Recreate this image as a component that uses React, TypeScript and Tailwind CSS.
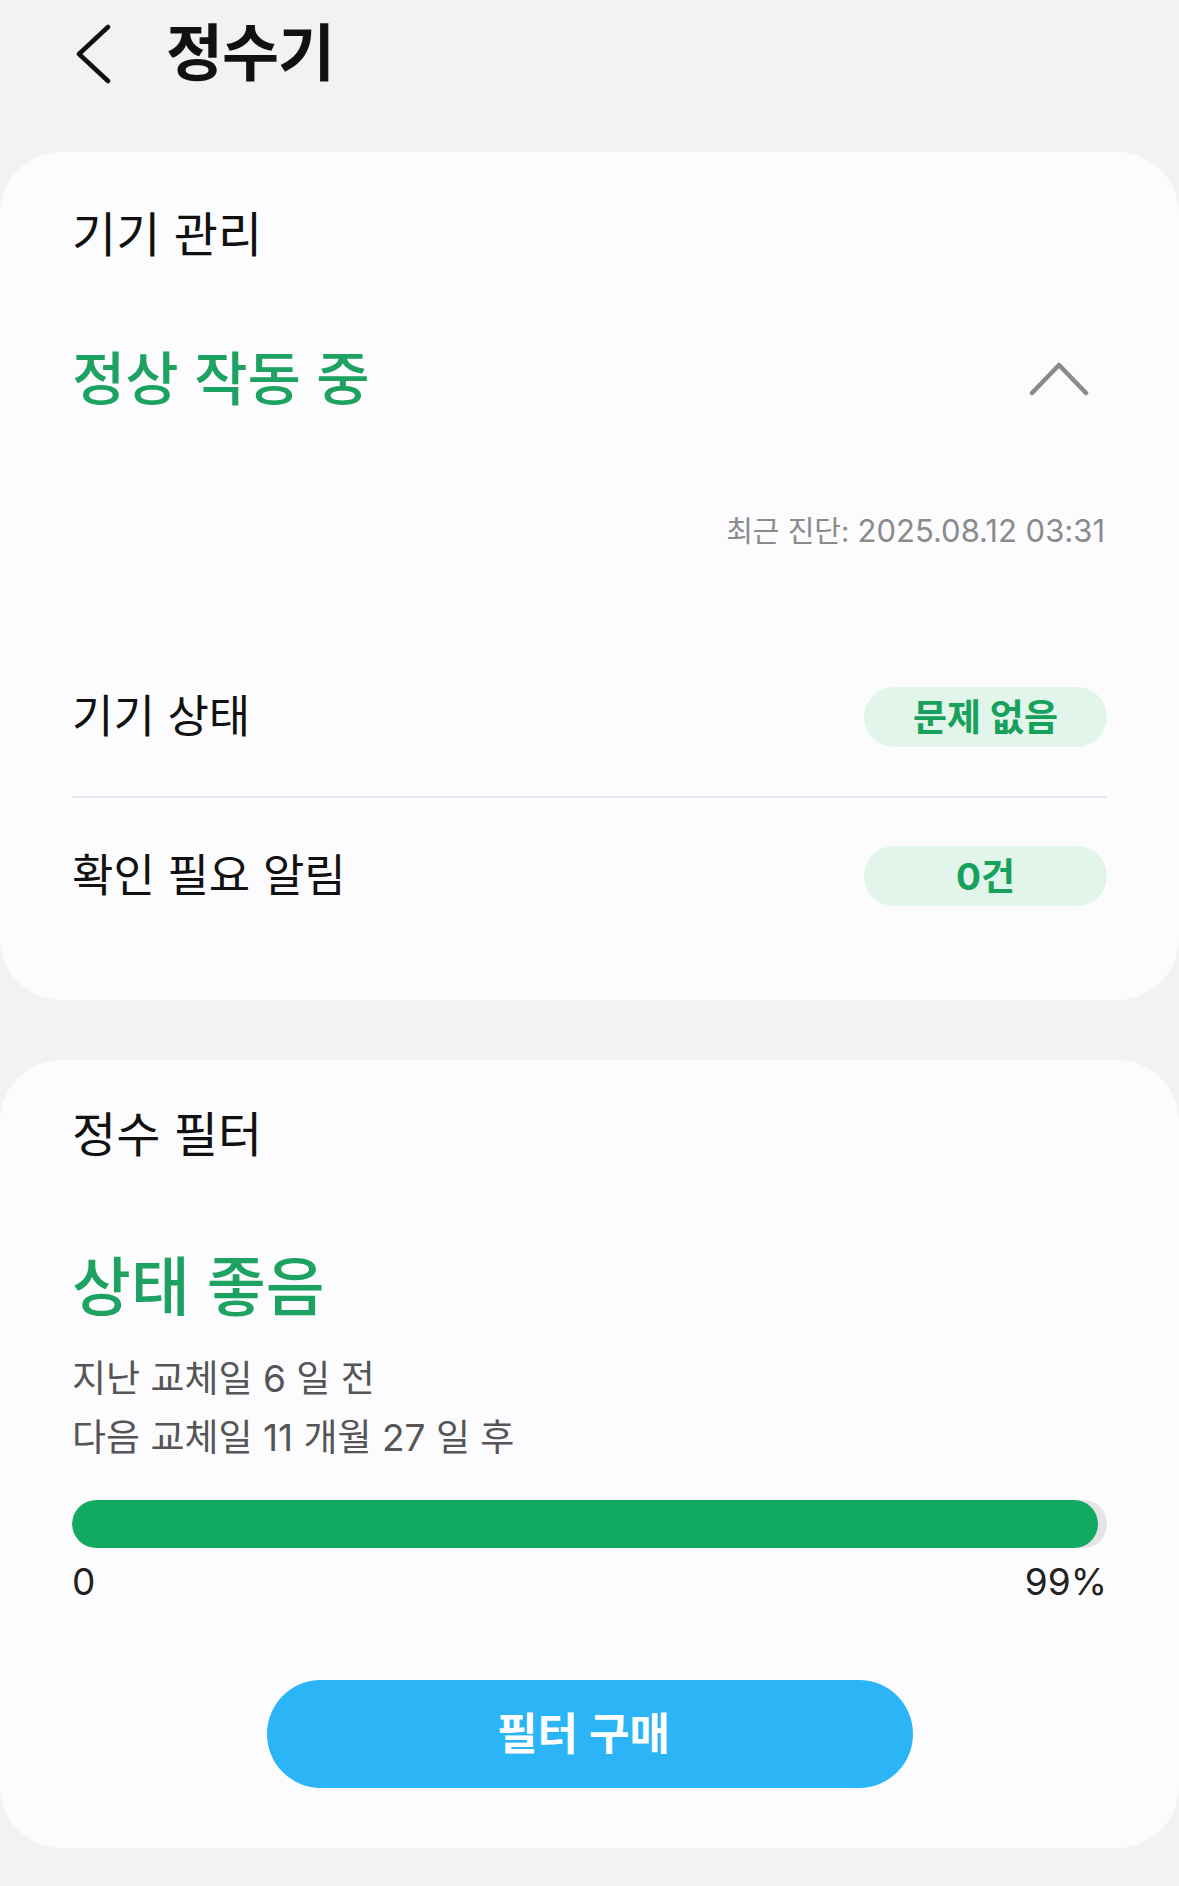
import React from "react";

const F = { fontFamily: 'Inter, "Noto Sans CJK KR", "Noto Sans", sans-serif' };

function Badge({ children }: { children: React.ReactNode }) {
  return (
    <div className="w-[243px] h-[60px] rounded-full bg-[#e2f5ea] flex items-center justify-center text-[37px] font-bold text-[#17a15d] leading-none">
      {children}
    </div>
  );
}

export default function App() {
  return (
    <div style={F} className="w-[1179px] min-h-[1886px] bg-[#f2f2f4] pb-[36px]">
      {/* Header */}
      <div className="h-[108px] mb-[44px] flex items-center">
        <div className="w-[166px] flex items-center pl-[75px]">
          <svg width="38" height="60" viewBox="0 0 38 60" fill="none">
            <polyline points="33,3 4,30 33,57" stroke="#111" strokeWidth="4.5" strokeLinecap="round" strokeLinejoin="round" />
          </svg>
        </div>
        <h1 className="text-[62px] font-bold text-[#111] leading-none tracking-[-1px]">정수기</h1>
      </div>

      {/* Card 1 */}
      <div className="bg-[#fcfcfe] rounded-[62px] px-[72px] pb-[46px]">
        <div className="pt-[56px] h-[110px] text-[48px] leading-[54px] text-[#111]">기기 관리</div>
        <div className="mt-[85px] h-[64px] flex items-center justify-between">
          <div className="text-[58px] font-medium leading-[64px] text-[#1ea262]">정상 작동 중</div>
          <svg width="60" height="36" viewBox="0 0 60 36" fill="none" className="mr-[18px]">
            <polyline points="3,32 30,4 57,32" stroke="#8a8a8a" strokeWidth="4.5" strokeLinecap="round" strokeLinejoin="round" />
          </svg>
        </div>
        <div className="mt-[100px] h-[40px] text-right leading-[40px] text-[#8b8b8b] pr-[2px]">
          <span className="text-[29px]">최근 진단: </span>
          <span className="text-[31px]">2025.08.12 03:31</span>
        </div>
        <div className="mt-[87px] h-[158px] flex items-center justify-between">
          <div className="text-[45px] leading-[54px] text-[#111]">기기 상태</div>
          <Badge>문제 없음</Badge>
        </div>
        <div className="h-[2px] bg-[#e6e6ec]" />
        <div className="h-[156px] flex items-center justify-between">
          <div className="text-[45px] leading-[54px] text-[#111]">확인 필요 알림</div>
          <Badge>0건</Badge>
        </div>
      </div>

      {/* Card 2 */}
      <div className="mt-[60px] bg-[#fcfcfe] rounded-[62px] px-[72px] pb-[60px]">
        <div className="pt-[48px] text-[48px] leading-[54px] text-[#111]">정수 필터</div>
        <div className="mt-[90px] text-[64px] font-medium leading-[70px] text-[#1ea262]">상태 좋음</div>
        <div className="mt-[27px] text-[37px] leading-[59px] text-[#555]">
          <div>지난 교체일 6 일 전</div>
          <div>다음 교체일 11 개월 27 일 후</div>
        </div>
        <div className="mt-[33px] h-[48px] rounded-full bg-[#e4e4e6] overflow-hidden">
          <div className="h-full rounded-full bg-[#12aa60]" style={{ width: "99.1%" }} />
        </div>
        <div className="mt-[12px] flex justify-between text-[37px] leading-[44px] text-[#222]">
          <span>0</span>
          <span>99%</span>
        </div>
        <div className="mt-[76px] flex justify-center">
          <button className="w-[646px] h-[108px] rounded-full bg-[#2bb5f7] text-white text-[44px] font-semibold leading-none pr-[12px]">
            필터 구매
          </button>
        </div>
      </div>
    </div>
  );
}
